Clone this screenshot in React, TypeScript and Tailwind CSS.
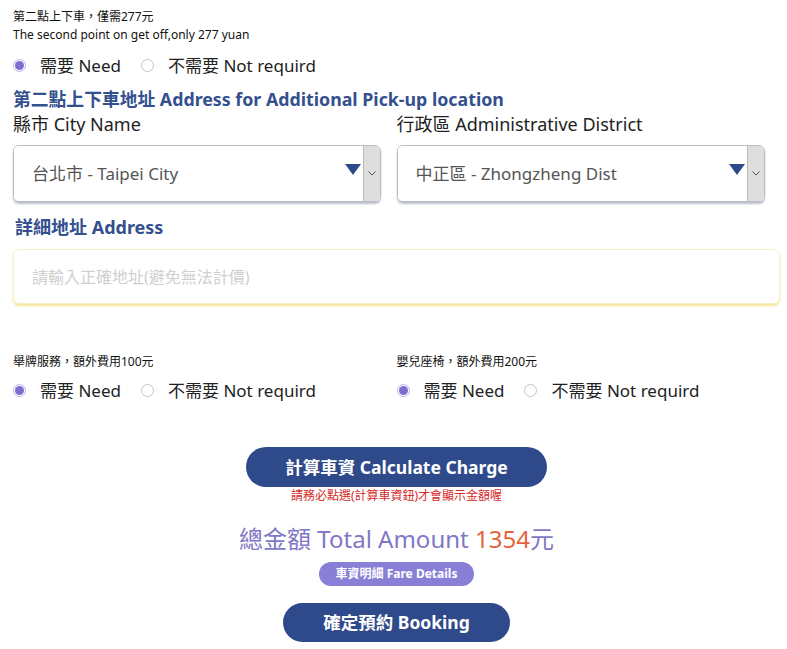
import React from "react";

const font = { fontFamily: '"Noto Sans", "Noto Sans CJK TC", sans-serif' };

function Radio({ checked }: { checked: boolean }) {
  return (
    <span
      className={
        "inline-flex h-[13px] w-[13px] shrink-0 items-center justify-center rounded-full border " +
        (checked ? "border-[#b9b2e6] bg-white" : "border-[#c4c4c4] bg-white")
      }
    >
      {checked && <span className="h-[9px] w-[9px] rounded-full bg-[#7b6fd2]" />}
    </span>
  );
}

function RadioRow() {
  return (
    <div className="flex items-center text-[17px] text-[#222] leading-none">
      <Radio checked />
      <span className="ml-[14px]">需要 Need</span>
      <span className="ml-[20px]" />
      <Radio checked={false} />
      <span className="ml-[14px]">不需要 Not requird</span>
    </div>
  );
}

function Select({ value }: { value: string }) {
  return (
    <div className="flex h-[57px] w-[96%] items-stretch overflow-hidden rounded-[6px] border border-[#b8bcc4] shadow-[0_2px_2px_rgba(60,70,110,0.35)]">
      <div className="flex flex-1 items-center justify-between bg-white pl-[18px] pr-[2px]">
        <span className="text-[17px] text-[#555]">{value}</span>
        <svg width="16" height="11" viewBox="0 0 16 11" className="mb-[8px]">
          <polygon points="0,0 16,0 8,11" fill="#2f4a8a" />
        </svg>
      </div>
      <div className="flex w-[17px] items-center justify-center border-l border-[#bbb] bg-[#dedede]">
        <svg width="8" height="5" viewBox="0 0 8 5">
          <polyline points="0.5,0.5 4,4 7.5,0.5" fill="none" stroke="#555" strokeWidth="1" />
        </svg>
      </div>
    </div>
  );
}

export default function App() {
  return (
    <div className="min-h-[649px] bg-white pl-[13px] pr-[7px] pt-[8px]" style={font}>
      <div className="text-[12px] leading-[18px] text-[#111]">第二點上下車，僅需277元</div>
      <div className="text-[12px] leading-[18px] text-[#111]">The second point on get off,only 277 yuan</div>
      <div className="mt-[13px]">
        <RadioRow />
      </div>
      <div className="mt-[13px] text-[17.8px] font-bold leading-[24px] text-[#34508e]">
        第二點上下車地址 Address for Additional Pick-up location
      </div>
      <div className="grid grid-cols-2">
        <div>
          <div className="text-[18px] leading-[26px] text-[#222]">縣市 City Name</div>
          <div className="mt-[8px]">
            <Select value="台北市 - Taipei City" />
          </div>
        </div>
        <div>
          <div className="text-[18px] leading-[26px] text-[#222]">行政區 Administrative District</div>
          <div className="mt-[8px]">
            <Select value="中正區 - Zhongzheng Dist" />
          </div>
        </div>
      </div>
      <div className="mt-[13px] pl-[2px] text-[18px] font-bold leading-[24px] text-[#34508e]">詳細地址 Address</div>
      <div className="mt-[10px] flex h-[55px] items-center rounded-[6px] border border-[#f7f0c4] pl-[18px] shadow-[0_2px_2px_rgba(235,220,110,0.7)]">
        <span className="text-[16px] text-[#cfcfcf]">請輸入正確地址(避免無法計價)</span>
      </div>
      <div className="mt-[49px] grid grid-cols-2">
        <div>
          <div className="text-[12px] leading-[18px] text-[#111]">舉牌服務，額外費用100元</div>
          <div className="mt-[11px]">
            <RadioRow />
          </div>
        </div>
        <div>
          <div className="text-[12px] leading-[18px] text-[#111]">嬰兒座椅，額外費用200元</div>
          <div className="mt-[11px]">
            <RadioRow />
          </div>
        </div>
      </div>
      <div className="mt-[48px] flex flex-col items-center">
        <div className="flex h-[40px] w-[301px] items-center justify-center rounded-full bg-[#2f4a8a] text-[17.5px] font-bold text-white">
          計算車資 Calculate Charge
        </div>
        <div className="mt-[1px] text-[12px] leading-[16px] text-[#d42a2a]">請務必點選(計算車資鈕)才會顯示金額喔</div>
        <div className="mt-[20px] text-[24px] leading-[30px] text-[#7f78c6]">
          總金額 Total Amount <span className="text-[#e4643a]">1354</span>元
        </div>
        <div className="mt-[8px] flex h-[24px] w-[155px] items-center justify-center rounded-full bg-[#8a7fd6] text-[12px] font-bold text-white">
          車資明細 Fare Details
        </div>
        <div className="mt-[17px] flex h-[39px] w-[227px] items-center justify-center rounded-full bg-[#2f4a8a] text-[17.5px] font-bold text-white">
          確定預約 Booking
        </div>
      </div>
    </div>
  );
}
